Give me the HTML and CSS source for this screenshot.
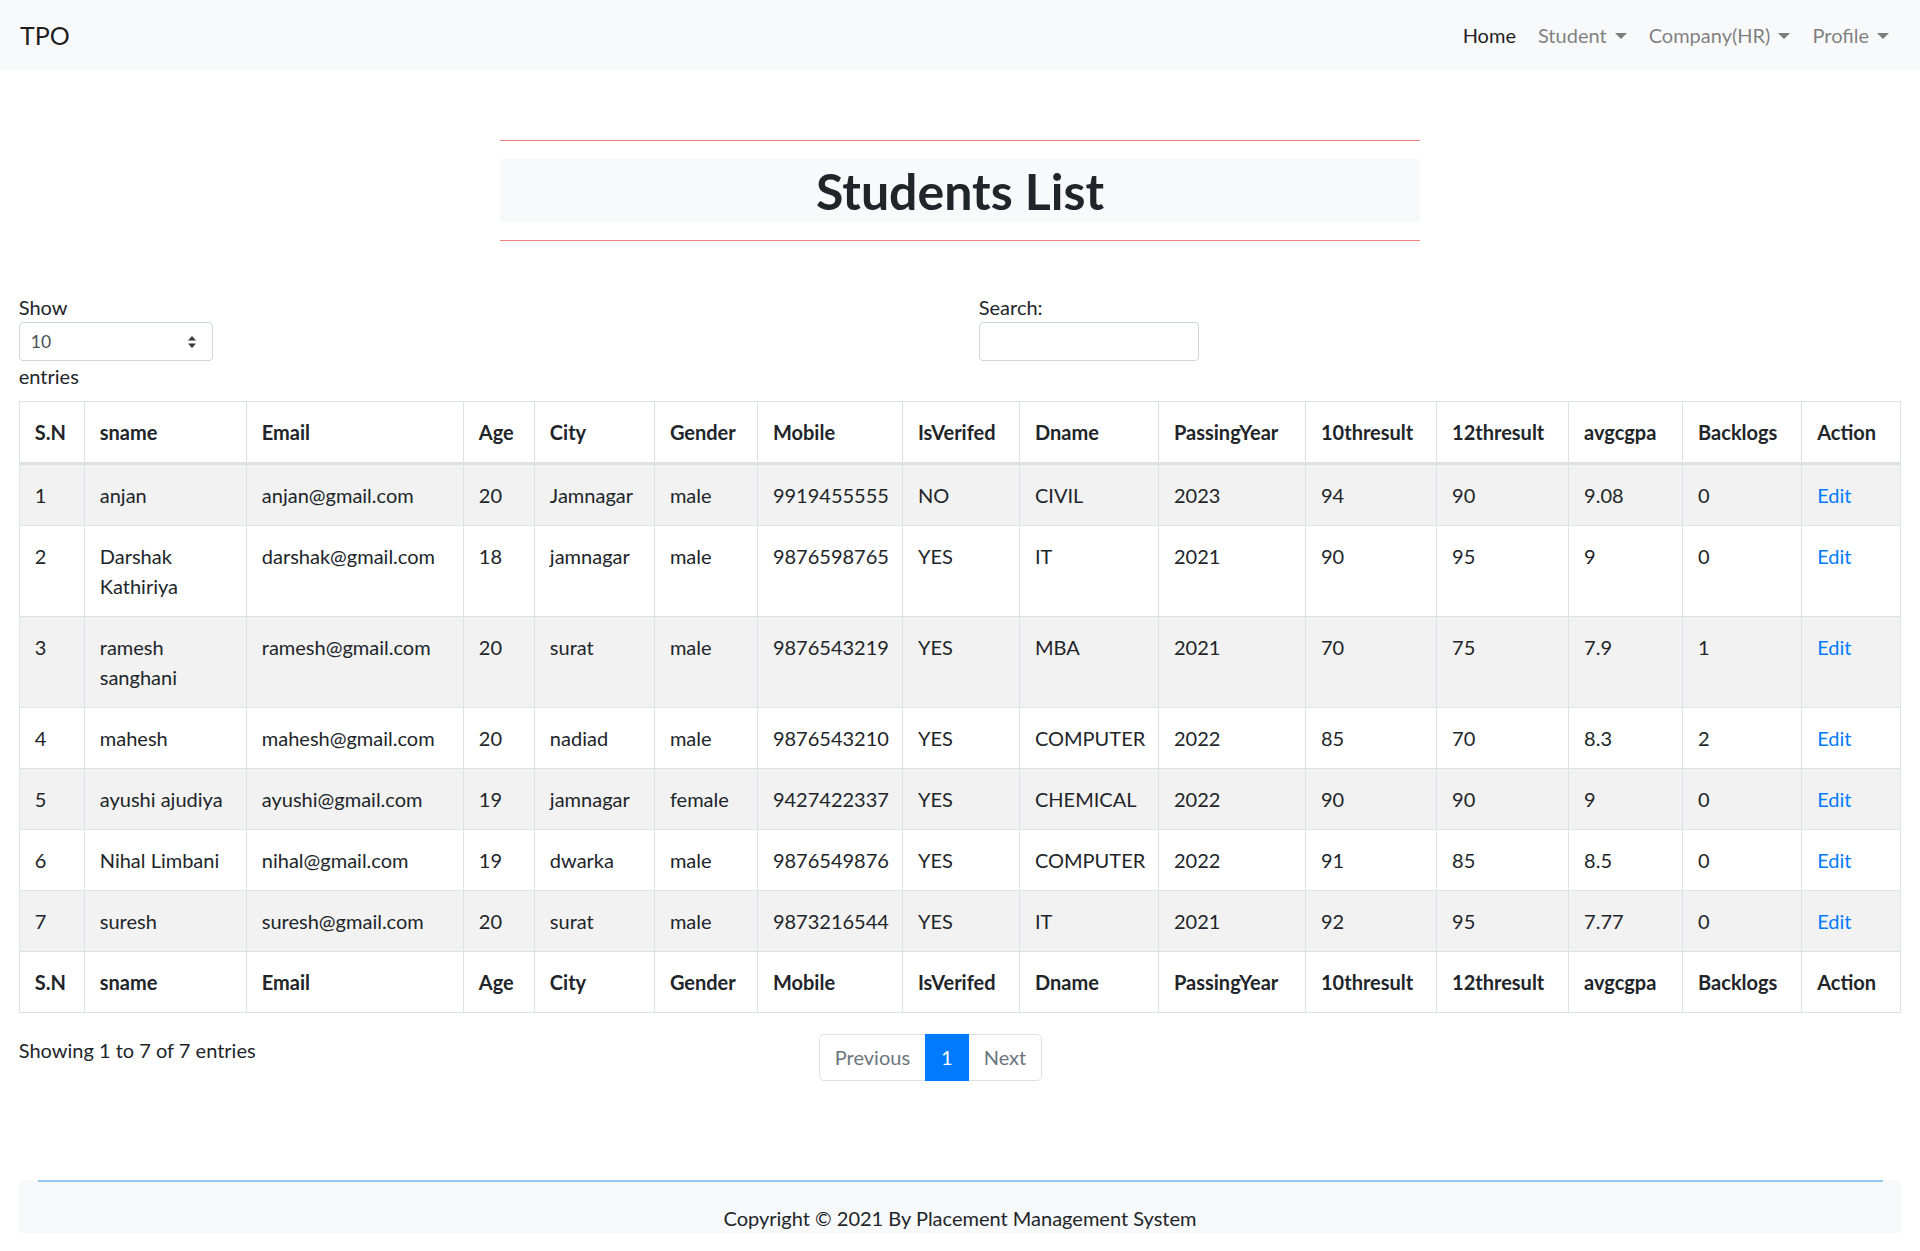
FILE: index.html
```html
<!DOCTYPE html>
<html lang="en">
<head>
<meta charset="utf-8">
<title>Students List</title>
<link rel="stylesheet" href="styles.css">
</head>
<body>
<nav class="navbar">
  <a class="brand" href="#">TPO</a>
  <ul class="nav">
    <li><a class="nav-link active" href="#">Home</a></li>
    <li><a class="nav-link dropdown" href="#">Student</a></li>
    <li><a class="nav-link dropdown" href="#">Company(HR)</a></li>
    <li><a class="nav-link dropdown" href="#">Profile</a></li>
  </ul>
</nav>

<main class="container">
  <div class="title-wrap">
    <hr class="red-rule">
    <h1 class="title">Students List</h1>
    <hr class="red-rule">
  </div>

  <div class="dt-row dt-top">
    <div class="col">
      <label class="dt-label">Show
        <span class="select-box"><span>10</span>
          <svg class="select-arrows" width="10" height="14" viewBox="0 0 10 14"><path d="M5 1 L9 5.5 H1 Z M5 13 L1 8.5 H9 Z" fill="#343a40"/></svg>
        </span>
        entries</label>
    </div>
    <div class="col">
      <label class="dt-label">Search:
        <span class="search-box"></span>
      </label>
    </div>
  </div>

  <table class="table">
    <colgroup>
      <col style="width:65px"><col style="width:162px"><col style="width:217px"><col style="width:71px"><col style="width:120px"><col style="width:103px"><col style="width:145px"><col style="width:117px"><col style="width:139px"><col style="width:147px"><col style="width:131px"><col style="width:132px"><col style="width:114px"><col style="width:119px"><col style="width:99px">
    </colgroup>
    <thead>
      <tr><th>S.N</th><th>sname</th><th>Email</th><th>Age</th><th>City</th><th>Gender</th><th>Mobile</th><th>IsVerifed</th><th>Dname</th><th>PassingYear</th><th>10thresult</th><th>12thresult</th><th>avgcgpa</th><th>Backlogs</th><th>Action</th></tr>
    </thead>
    <tbody>
      <tr><td>1</td><td>anjan</td><td>anjan@gmail.com</td><td>20</td><td>Jamnagar</td><td>male</td><td>9919455555</td><td>NO</td><td>CIVIL</td><td>2023</td><td>94</td><td>90</td><td>9.08</td><td>0</td><td><a class="edit" href="#">Edit</a></td></tr>
      <tr><td>2</td><td>Darshak Kathiriya</td><td>darshak@gmail.com</td><td>18</td><td>jamnagar</td><td>male</td><td>9876598765</td><td>YES</td><td>IT</td><td>2021</td><td>90</td><td>95</td><td>9</td><td>0</td><td><a class="edit" href="#">Edit</a></td></tr>
      <tr><td>3</td><td>ramesh sanghani</td><td>ramesh@gmail.com</td><td>20</td><td>surat</td><td>male</td><td>9876543219</td><td>YES</td><td>MBA</td><td>2021</td><td>70</td><td>75</td><td>7.9</td><td>1</td><td><a class="edit" href="#">Edit</a></td></tr>
      <tr><td>4</td><td>mahesh</td><td>mahesh@gmail.com</td><td>20</td><td>nadiad</td><td>male</td><td>9876543210</td><td>YES</td><td>COMPUTER</td><td>2022</td><td>85</td><td>70</td><td>8.3</td><td>2</td><td><a class="edit" href="#">Edit</a></td></tr>
      <tr><td>5</td><td>ayushi ajudiya</td><td>ayushi@gmail.com</td><td>19</td><td>jamnagar</td><td>female</td><td>9427422337</td><td>YES</td><td>CHEMICAL</td><td>2022</td><td>90</td><td>90</td><td>9</td><td>0</td><td><a class="edit" href="#">Edit</a></td></tr>
      <tr><td>6</td><td>Nihal Limbani</td><td>nihal@gmail.com</td><td>19</td><td>dwarka</td><td>male</td><td>9876549876</td><td>YES</td><td>COMPUTER</td><td>2022</td><td>91</td><td>85</td><td>8.5</td><td>0</td><td><a class="edit" href="#">Edit</a></td></tr>
      <tr><td>7</td><td>suresh</td><td>suresh@gmail.com</td><td>20</td><td>surat</td><td>male</td><td>9873216544</td><td>YES</td><td>IT</td><td>2021</td><td>92</td><td>95</td><td>7.77</td><td>0</td><td><a class="edit" href="#">Edit</a></td></tr>
    </tbody>
    <tfoot>
      <tr><th>S.N</th><th>sname</th><th>Email</th><th>Age</th><th>City</th><th>Gender</th><th>Mobile</th><th>IsVerifed</th><th>Dname</th><th>PassingYear</th><th>10thresult</th><th>12thresult</th><th>avgcgpa</th><th>Backlogs</th><th>Action</th></tr>
    </tfoot>
  </table>

  <div class="dt-row dt-bottom">
    <div class="col">
      <div class="dt-info">Showing 1 to 7 of 7 entries</div>
    </div>
    <div class="col">
      <ul class="pagination">
        <li class="page-item disabled"><a class="page-link" href="#">Previous</a></li>
        <li class="page-item active"><a class="page-link" href="#">1</a></li>
        <li class="page-item disabled"><a class="page-link" href="#">Next</a></li>
      </ul>
    </div>
  </div>
</main>

<footer class="footer">
  <hr class="blue-rule">
  <p class="copyright">Copyright © 2021 By Placement Management System</p>
</footer>
</body>
</html>
```

FILE: styles.css
```css
* { box-sizing: border-box; }

html, body {
  margin: 0;
  padding: 0;
  background: #fff;
}

body {
  font-family: Lato, "Open Sans", "Liberation Sans", sans-serif;
  font-size: 20px;
  line-height: 30px;
  color: #212529;
}

a { text-decoration: none; }

/* ---------- navbar ---------- */
.navbar {
  height: 70px;
  background: #f8f9fa;
  display: flex;
  align-items: center;
  padding: 0 20px;
}

.brand {
  font-size: 25px;
  line-height: 36px;
  color: rgba(0, 0, 0, 0.9);
}

.nav {
  list-style: none;
  margin: 0 0 0 auto;
  padding: 0;
  display: flex;
}

.nav-link {
  display: block;
  padding: 10px 11px;
  color: rgba(0, 0, 0, 0.5);
}

.nav-link.active { color: rgba(0, 0, 0, 0.9); }

.nav-link.dropdown::after {
  content: "";
  display: inline-block;
  margin-left: 8px;
  vertical-align: 4px;
  border-top: 6px solid;
  border-left: 6px solid transparent;
  border-right: 6px solid transparent;
}

/* ---------- main ---------- */
.container {
  padding: 0 18.75px;
}

.title-wrap {
  width: 920px;
  margin: 70px auto 0;
}

.red-rule {
  margin: 0;
  border: 0;
  border-top: 1px solid #f08181;
}

.title {
  margin: 18px 0;
  height: 63px;
  padding-top: 2px;
  background: #f8f9fa;
  text-align: center;
  font-size: 50px;
  line-height: 61px;
  font-weight: 700;
  color: #212529;
}

.dt-row {
  display: grid;
  margin: 0 -18.75px;
}

.dt-row .col { padding: 0 18.75px; }

.dt-top {
  grid-template-columns: 1fr 1fr;
  margin-top: 51px;
}

.dt-label {
  display: block;
  font-weight: 400;
}

.select-box {
  display: flex;
  align-items: center;
  justify-content: space-between;
  width: 194px;
  height: 39px;
  padding: 0 15px 0 11px;
  border: 1px solid #ced4da;
  border-radius: 4px;
  font-size: 17.5px;
  color: #495057;
}

.select-arrows { display: block; }

.search-box {
  display: block;
  width: 220px;
  height: 39px;
  border: 1px solid #ced4da;
  border-radius: 4px;
}

/* ---------- table ---------- */
.table {
  width: 100%;
  margin-top: 10px;
  table-layout: fixed;
  border-collapse: collapse;
  border: 1px solid #dee2e6;
}

.table th,
.table td {
  padding: 15px;
  text-align: left;
  vertical-align: top;
  border: 1px solid #dee2e6;
  line-height: 30px;
}

.table th { font-weight: 700; }

.table thead th { border-bottom: 3px solid #dee2e6; }

.table tbody tr:nth-child(odd) { background: #f2f2f2; }

.edit { color: #007bff; }

/* ---------- bottom ---------- */
.dt-bottom {
  grid-template-columns: 5fr 7fr;
  margin-top: 22px;
}

.pagination {
  list-style: none;
  margin: -1px 0 0;
  padding: 0;
  display: flex;
}

.page-link {
  display: block;
  padding: 10px 15px;
  line-height: 25px;
  border: 1px solid #dee2e6;
  margin-left: -1px;
  background: #fff;
  color: #6c757d;
}

.page-item:first-child .page-link {
  margin-left: 0;
  border-radius: 5px 0 0 5px;
}

.page-item:last-child .page-link { border-radius: 0 5px 5px 0; }

.page-item.active .page-link {
  background: #007bff;
  border-color: #007bff;
  color: #fff;
  position: relative;
  z-index: 1;
}

/* ---------- footer ---------- */
.footer {
  margin: 99px 18.75px 20px;
  background: #f8f9fa;
}

.blue-rule {
  margin: 0 18.75px;
  border: 0;
  border-top: 2px solid #92c9f2;
}

.copyright {
  margin: 21px 0 0;
  text-align: center;
}
```
